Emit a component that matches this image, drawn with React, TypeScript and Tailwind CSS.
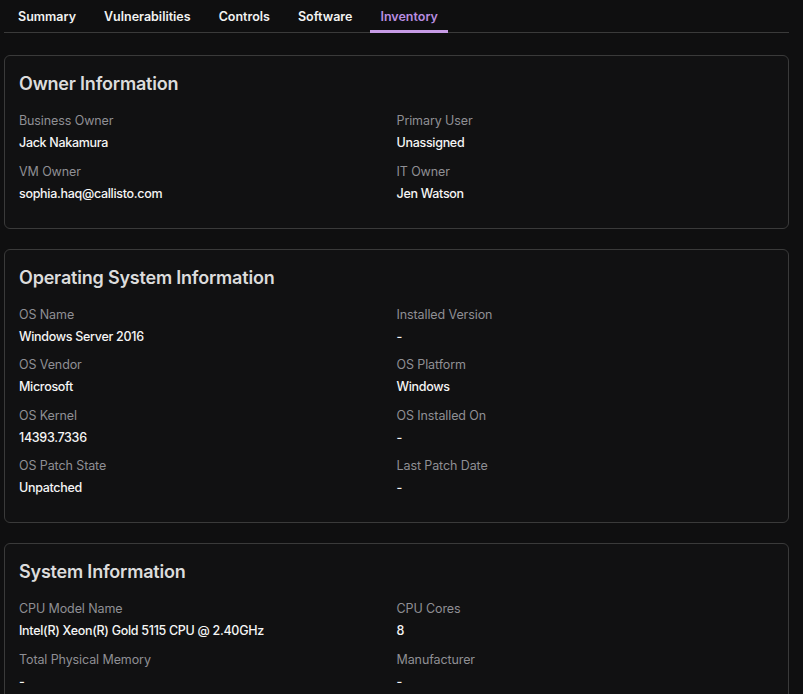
import React from 'react'

type Field = { label: string; value: string }

const tabs = ['Summary', 'Vulnerabilities', 'Controls', 'Software', 'Inventory']

const sections: { title: string; fields: Field[] }[] = [
  {
    title: 'Owner Information',
    fields: [
      { label: 'Business Owner', value: 'Jack Nakamura' },
      { label: 'Primary User', value: 'Unassigned' },
      { label: 'VM Owner', value: 'sophia.haq@callisto.com' },
      { label: 'IT Owner', value: 'Jen Watson' },
    ],
  },
  {
    title: 'Operating System Information',
    fields: [
      { label: 'OS Name', value: 'Windows Server 2016' },
      { label: 'Installed Version', value: '-' },
      { label: 'OS Vendor', value: 'Microsoft' },
      { label: 'OS Platform', value: 'Windows' },
      { label: 'OS Kernel', value: '14393.7336' },
      { label: 'OS Installed On', value: '-' },
      { label: 'OS Patch State', value: 'Unpatched' },
      { label: 'Last Patch Date', value: '-' },
    ],
  },
  {
    title: 'System Information',
    fields: [
      { label: 'CPU Model Name', value: 'Intel(R) Xeon(R) Gold 5115 CPU @ 2.40GHz' },
      { label: 'CPU Cores', value: '8' },
      { label: 'Total Physical Memory', value: '-' },
      { label: 'Manufacturer', value: '-' },
      { label: 'Model', value: '-' },
      { label: 'Serial Number', value: '-' },
    ],
  },
]

const InfoCard: React.FC<{ title: string; fields: Field[] }> = ({ title, fields }) => (
  <div className="rounded-md border border-[#3a3a3a] bg-[#111112] px-[14px] pt-[16px] pb-[25px]">
    <h2 className="mb-[16px] text-[18px] leading-[24px] font-semibold tracking-[-0.2px] text-[#dcdcdc]">
      {title}
    </h2>
    <div className="grid grid-cols-2 gap-y-[10.5px]">
      {fields.map((f) => (
        <div key={f.label} className="flex flex-col gap-1">
          <span className="text-[12.5px] leading-[18px] tracking-[-0.1px] text-[#8f8f94]">{f.label}</span>
          <span className="text-[12.5px] leading-[18px] font-medium tracking-[-0.3px] text-[#f5f5f5]">
            {f.value}
          </span>
        </div>
      ))}
    </div>
  </div>
)

export default function App() {
  return (
    <div
      className="min-h-screen bg-[#0f0f10] pl-1 pr-[14px] pb-10"
      style={{ fontFamily: 'Inter, "Noto Sans", sans-serif' }}
    >
      {/* Tabs */}
      <div className="flex gap-2 border-b border-[#3a3a3a] px-1">
        {tabs.map((t) => {
          const active = t === 'Inventory'
          return (
            <button
              key={t}
              className={
                active
                  ? '-mb-px border-b-[3px] border-[#c79be6] px-[10px] pt-[8px] pb-[4px] text-[12.5px] leading-[18px] font-semibold text-[#b98de0]'
                  : '-mb-px border-b-[3px] border-transparent px-[10px] pt-[8px] pb-[4px] text-[12.5px] leading-[18px] font-semibold text-[#f2f2f2]'
              }
            >
              {t}
            </button>
          )
        })}
      </div>

      {/* Sections */}
      <div className="mt-[22px] flex flex-col gap-5">
        {sections.map((s) => (
          <InfoCard key={s.title} title={s.title} fields={s.fields} />
        ))}
      </div>
    </div>
  )
}
